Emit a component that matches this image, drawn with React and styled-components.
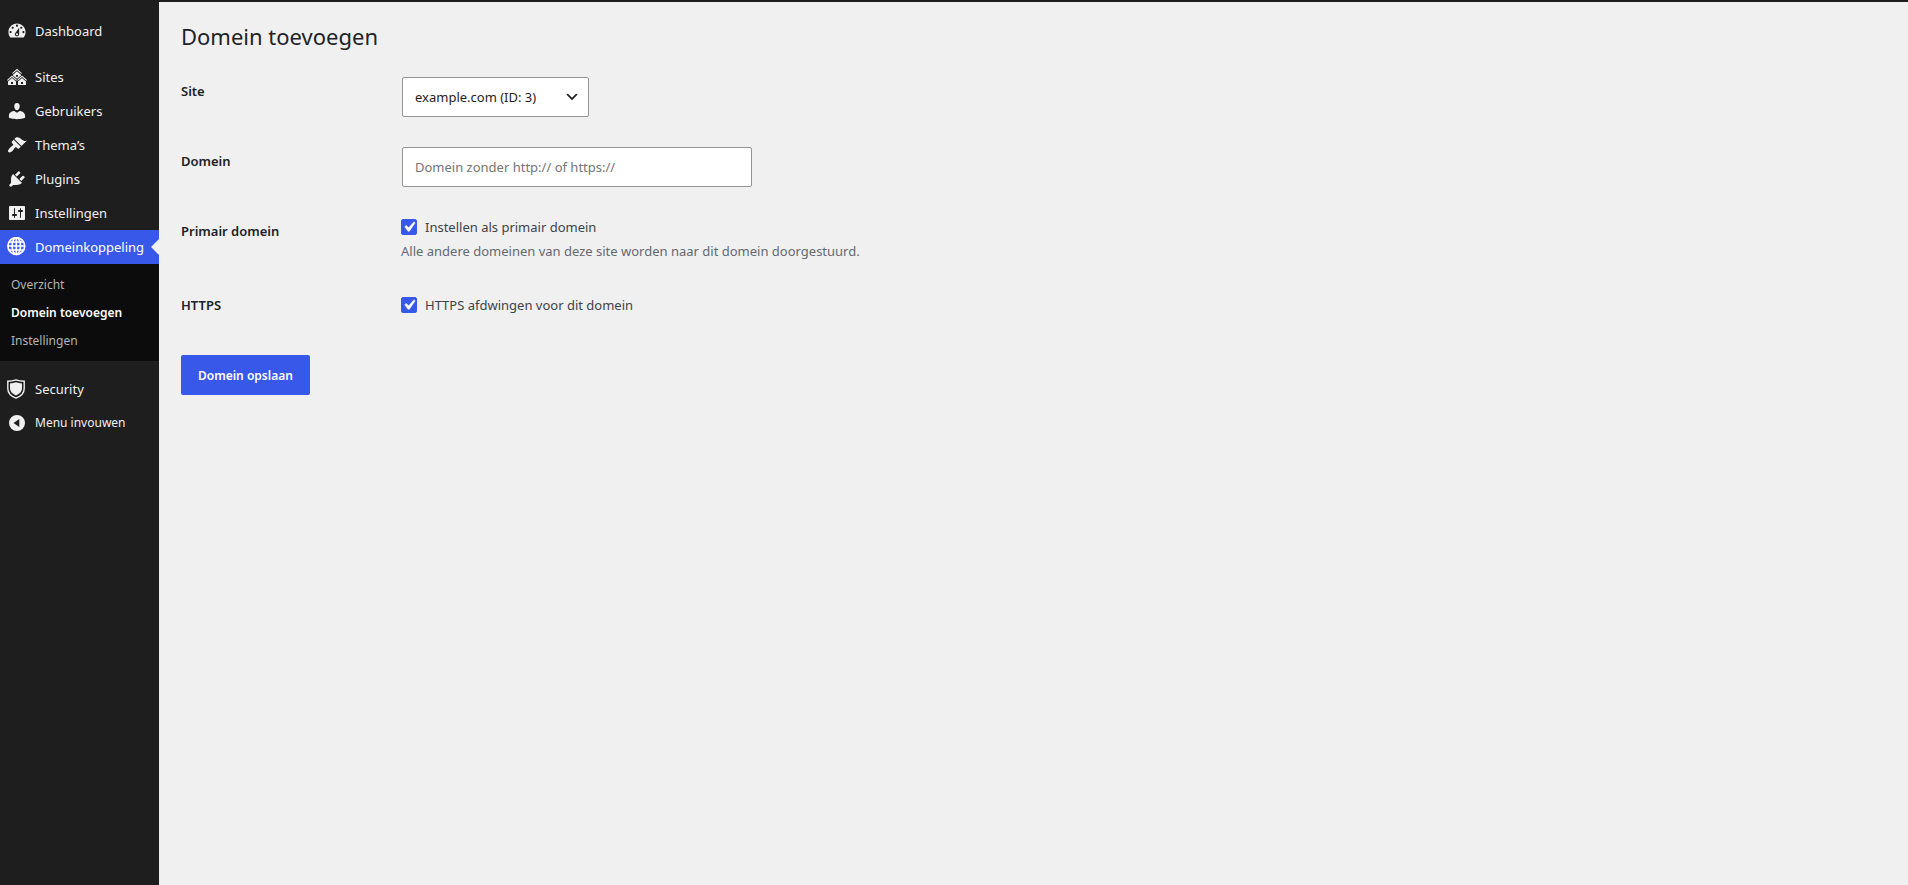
import { useState } from "react";
import styled, { css, createGlobalStyle } from "styled-components";

const GlobalStyle = createGlobalStyle`
  * {
    box-sizing: border-box;
  }
  body {
    margin: 0;
    background: #f0f0f0;
    color: #3c434a;
    font-family: "Segoe UI", "Noto Sans", "Open Sans", sans-serif;
    font-size: 13px;
  }
`;

const Page = styled.div`
  display: flex;
  min-height: 100vh;
  border-top: 2px solid #1e1e1e;
`;
const Sidebar = styled.nav`
  flex: 0 0 159px;
  padding-top: 12px;
  background: #1e1e1e;
`;
const Menu = styled.ul`
  list-style: none;
  margin: 0;
  padding: 0;
`;
const MenuItem = styled.li`
  margin-top: ${(props) => props.$gap || 0}px;
`;
const menuRow = css`
  display: flex;
  align-items: center;
  width: 100%;
  height: 34px;
  padding: 0 0 0 7px;
  gap: 8px;
  border: 0;
  background: transparent;
  color: #f0f0f1;
  font-family: inherit;
  font-size: 13px;
  line-height: 18px;
  text-decoration: none;
  white-space: nowrap;
  cursor: pointer;
`;
const MenuLink = styled.a`
  ${menuRow}
  ${(props) =>
    props.$current &&
    css`
      position: relative;
      background: #3858e9;
      color: #fff;
      &::after {
        content: "";
        position: absolute;
        right: 0;
        top: 9px;
        border: 8px solid transparent;
        border-left-width: 0;
        border-right-color: #f0f0f0;
      }
    `};
`;
const CollapseButton = styled.button`
  ${menuRow}
  font-size: 12px;
`;
const Icon = styled.svg`
  flex: none;
  width: ${(props) => props.$size || 20}px;
  height: ${(props) => props.$size || 20}px;
  fill: currentColor;
`;
const SubMenu = styled.ul`
  list-style: none;
  margin: 0;
  padding: 7px 0 6px;
  background: #0c0c0c;
`;
const SubLink = styled.a`
  display: block;
  padding: 5px 11px;
  color: #b4b4b4;
  line-height: 18px;
  font-size: 12px;
  white-space: nowrap;
  text-decoration: none;
  ${(props) =>
    props.$current &&
    css`
      color: #fff;
      font-weight: 600;
    `};
`;

const Content = styled.main`
  flex: 1;
  min-width: 0;
  padding: 19px 22px;
`;
const Title = styled.h1`
  margin: 0 0 11px;
  color: #1d2327;
  font-size: 22px;
  font-weight: 400;
  line-height: 30px;
`;
const Row = styled.div`
  display: grid;
  grid-template-columns: 200px 1fr;
  column-gap: 20px;
  align-items: ${(props) => (props.$center ? "center" : "start")};
  padding: 15px 0;
`;
const RowHead = styled.div`
  padding: 5px 0;
  color: #1d2327;
  font-weight: 600;
  line-height: 18px;
`;
const field = css`
  height: 40px;
  margin: 0 0 0 1px;
  padding: 0 12px;
  border: 1px solid #949494;
  border-radius: 2px;
  background: #fff;
  font-family: inherit;
  font-size: 13px;
`;
const FieldCell = styled.div`
  display: flex;
`;
const SelectWrap = styled.div`
  display: grid;
  align-items: center;
  svg {
    grid-area: 1 / 1;
    justify-self: end;
    margin-right: 9px;
    color: #1e1e1e;
    pointer-events: none;
  }
`;
const Select = styled.select`
  ${field}
  grid-area: 1 / 1;
  width: 187px;
  appearance: none;
  color: #1e1e1e;
`;
const TextInput = styled.input`
  ${field}
  width: 350px;
  max-width: 100%;
  color: #1e1e1e;
  &::placeholder {
    color: #757575;
  }
`;
const CheckLabel = styled.label`
  display: flex;
  align-items: center;
  gap: 8px;
  line-height: 20px;
`;
const Checkbox = styled.input`
  appearance: none;
  width: 16px;
  height: 16px;
  margin: 0;
  border: 1px solid #949494;
  border-radius: 2px;
  background: #fff;
  &:checked {
    border-color: #3858e9;
    background: #3858e9
      url("data:image/svg+xml,%3Csvg xmlns='http://www.w3.org/2000/svg' viewBox='0 0 20 20'%3E%3Cpath d='M14.83 4.89l1.34.94-5.81 8.38H9.02L5.78 9.67l1.34-1.25 2.57 2.4z' fill='%23fff' stroke='%23fff' stroke-width='.5'/%3E%3C/svg%3E")
      center / 20px no-repeat;
  }
`;
const Hint = styled.p`
  margin: 4px 0 0;
  color: #646970;
  line-height: 20px;
`;
const SaveButton = styled.button`
  height: 40px;
  margin-top: 21px;
  padding: 0 17px;
  border: 0;
  border-radius: 2px;
  background: #3858e9;
  color: #fff;
  font-family: inherit;
  font-size: 12px;
  font-weight: 600;
  cursor: pointer;
`;

const icons = {
  dashboard: (
    <path
      transform="translate(-.7 -.7) scale(1.07)"
      d="M3.76 16h12.48c1.1-1.37 1.76-3.11 1.76-5 0-4.42-3.58-8-8-8s-8 3.58-8 8c0 1.89.66 3.63 1.76 5zM10 4c.55 0 1 .45 1 1s-.45 1-1 1-1-.45-1-1 .45-1 1-1zM6 6c.55 0 1 .45 1 1s-.45 1-1 1-1-.45-1-1 .45-1 1-1zm8 0c.55 0 1 .45 1 1s-.45 1-1 1-1-.45-1-1 .45-1 1-1zm-5.37 5.55L12 7v6c0 1.1-.9 2-2 2s-2-.9-2-2c0-.57.24-1.08.63-1.45zM4 10c.55 0 1 .45 1 1s-.45 1-1 1-1-.45-1-1 .45-1 1-1zm12 0c.55 0 1 .45 1 1s-.45 1-1 1-1-.45-1-1 .45-1 1-1zm-5 3c0-.55-.45-1-1-1s-1 .45-1 1 .45 1 1 1 1-.45 1-1z"
    />
  ),
  sites: (
    <path d="M14.27 6.87L10 3.14 5.73 6.87 5 6.14l5-4.38 5 4.38zM14 8.42l-4.05 3.43L6 8.38v-.74l4-3.5 4 3.5v.78zM11 9.7V8H9v1.7h2zm-1.73 4.03L5 10 .73 13.73 0 13l5-4.38L10 13zm10 0L15 10l-4.27 3.73L10 13l5-4.38L20 13zM5 11l4 3.5V18H1v-3.5zm10 0l4 3.5V18h-8v-3.5zm-9 6v-2H4v2h2zm10 0v-2h-2v2h2z" />
  ),
  users: (
    <path d="M10 9.25c-2.27 0-2.73-3.44-2.73-3.44C7 4.02 7.82 2 9.97 2c2.16 0 2.98 2.02 2.71 3.81 0 0-.41 3.44-2.68 3.44zm0 2.57L12.72 10c2.9 0 5.38 2.33 5.38 4.53v2.2s-4 1.42-8.1 1.42c-4.1 0-8.1-1.42-8.1-1.42v-2.2c0-2.25 2.4-4.48 5.33-4.48z" />
  ),
  themes: (
    <path d="M14.48 11.06L7.41 3.99l1.5-1.5c.5-.56 2.3-.47 3.51.32 1.21.8 1.43 1.28 2.91 2.1 1.18.64 2.45 1.26 4.45.85zm-.71.71L6.7 4.7 4.93 6.47c-.39.39-.39 1.02 0 1.41l1.06 1.06c.39.39.39 1.03 0 1.42-.6.6-1.43 1.11-2.21 1.69-.35.26-.7.53-1.01.84C1.43 14.23.4 16.08 1.4 17.07c.99 1 2.84-.03 4.18-1.36.31-.31.58-.66.85-1.02.57-.78 1.08-1.61 1.69-2.21.39-.39 1.02-.39 1.41 0l1.06 1.06c.39.39 1.02.39 1.41 0z" />
  ),
  plugins: (
    <path d="M13.11 4.36L9.87 7.6 8 5.73l3.24-3.24c.35-.34 1.05-.2 1.56.32.52.51.66 1.21.31 1.55zm-8 1.77l.91-1.12 9.01 9.01-1.19.84c-.71.71-2.63 1.16-3.82 1.16H6.14L4.9 17.26c-.59.59-1.54.59-2.12 0-.59-.58-.59-1.53 0-2.12l1.24-1.24v-3.88c0-1.13.4-3.19 1.09-3.89zm7.26 3.97l3.24-3.24c.34-.35 1.04-.21 1.55.31.52.51.66 1.21.31 1.55l-3.24 3.25z" />
  ),
  settings: (
    <path
      fillRule="evenodd"
      d="M18 16V4c0-.55-.45-1-1-1H3c-.55 0-1 .45-1 1v12c0 .55.45 1 1 1h14c.55 0 1-.45 1-1zM8 11h1c.55 0 1 .45 1 1s-.45 1-1 1H8v1.5c0 .28-.22.5-.5.5s-.5-.22-.5-.5V13H6c-.55 0-1-.45-1-1s.45-1 1-1h1V5.5c0-.28.22-.5.5-.5s.5.22.5.5V11zm5-2h-1c-.55 0-1-.45-1-1s.45-1 1-1h1V5.5c0-.28.22-.5.5-.5s.5.22.5.5V7h1c.55 0 1 .45 1 1s-.45 1-1 1h-1v5.5c0 .28-.22.5-.5.5s-.5-.22-.5-.5V9z"
    />
  ),
  globe: (
    <g fill="none" stroke="currentColor" strokeWidth="1.7">
      <circle cx="9.3" cy="9" r="8.4" />
      <ellipse cx="9.3" cy="9" rx="4.2" ry="8.4" />
      <path d="M9.3 1v16M1 9h16.600M2 5h14.600M2 13h14.600" />
    </g>
  ),
  security: (
    <>
      <path
        d="M9 .8c2.4 1 5 1.4 8.2 1.4v7.3c0 4.3-3.2 7.7-8.2 9.7C4 17.2.8 13.8.8 9.5V2.2C4 2.200 6.600 1.800 9 .8z"
        fill="none"
        stroke="currentColor"
        strokeWidth="1.4"
      />
      <path d="M9 3.3c1.900.7 3.900 1 6 1.100v5.100c0 3-2.300 5.200-6 6.900-3.700-1.700-6-3.900-6-6.900V4.400c2.100-.1 4.100-.4 6-1.100z" />
    </>
  ),
  collapse: (
    <path
      fillRule="evenodd"
      d="M10 2a8 8 0 1 0 0 16 8 8 0 0 0 0-16zm2.300 4v8L6.500 10z"
    />
  ),
};

const MenuIcon = ({ name }) => (
  <Icon viewBox="0 0 20 20" aria-hidden="true">
    {icons[name]}
  </Icon>
);

const menu = [
  { icon: "dashboard", label: "Dashboard" },
  { icon: "sites", label: "Sites", gap: 12 },
  { icon: "users", label: "Gebruikers" },
  { icon: "themes", label: "Thema’s" },
  { icon: "plugins", label: "Plugins" },
  { icon: "settings", label: "Instellingen" },
  {
    icon: "globe",
    label: "Domeinkoppeling",
    current: true,
    items: ["Overzicht", "Domein toevoegen", "Instellingen"],
  },
  { icon: "security", label: "Security", gap: 11 },
];

const AdminMenu = () => (
  <Sidebar>
    <Menu>
      {menu.map((item) => (
        <MenuItem key={item.label} $gap={item.gap}>
          <MenuLink href="#" $current={item.current}>
            <MenuIcon name={item.icon} />
            {item.label}
          </MenuLink>
          {item.items && (
            <SubMenu>
              {item.items.map((label) => (
                <li key={label}>
                  <SubLink href="#" $current={label === "Domein toevoegen"}>
                    {label}
                  </SubLink>
                </li>
              ))}
            </SubMenu>
          )}
        </MenuItem>
      ))}
      <MenuItem>
        <CollapseButton type="button">
          <MenuIcon name="collapse" />
          Menu invouwen
        </CollapseButton>
      </MenuItem>
    </Menu>
  </Sidebar>
);

const App = () => {
  const [domain, setDomain] = useState("");
  const [primary, setPrimary] = useState(true);
  const [https, setHttps] = useState(true);
  return (
    <>
      <GlobalStyle />
      <Page>
        <AdminMenu />
        <Content>
          <Title>Domein toevoegen</Title>
          <form onSubmit={(e) => e.preventDefault()}>
            <Row>
              <RowHead as="label" htmlFor="site">
                Site
              </RowHead>
              <FieldCell>
                <SelectWrap>
                  <Select id="site">
                    <option>example.com (ID: 3)</option>
                  </Select>
                  <Icon $size={16} viewBox="0 0 20 20" aria-hidden="true">
                    <path d="M5 6l5 5 5-5 2 1-7 7-7-7z" />
                  </Icon>
                </SelectWrap>
              </FieldCell>
            </Row>
            <Row>
              <RowHead as="label" htmlFor="domain">
                Domein
              </RowHead>
              <FieldCell>
                <TextInput
                  id="domain"
                  type="text"
                  placeholder="Domein zonder http:// of https://"
                  value={domain}
                  onChange={(e) => setDomain(e.target.value)}
                />
              </FieldCell>
            </Row>
            <Row>
              <RowHead>Primair domein</RowHead>
              <div>
                <CheckLabel>
                  <Checkbox
                    type="checkbox"
                    checked={primary}
                    onChange={(e) => setPrimary(e.target.checked)}
                  />
                  Instellen als primair domein
                </CheckLabel>
                <Hint>
                  Alle andere domeinen van deze site worden naar dit domein
                  doorgestuurd.
                </Hint>
              </div>
            </Row>
            <Row $center>
              <RowHead>HTTPS</RowHead>
              <CheckLabel>
                <Checkbox
                  type="checkbox"
                  checked={https}
                  onChange={(e) => setHttps(e.target.checked)}
                />
                HTTPS afdwingen voor dit domein
              </CheckLabel>
            </Row>
            <SaveButton type="submit">Domein opslaan</SaveButton>
          </form>
        </Content>
      </Page>
    </>
  );
};

export default App;
